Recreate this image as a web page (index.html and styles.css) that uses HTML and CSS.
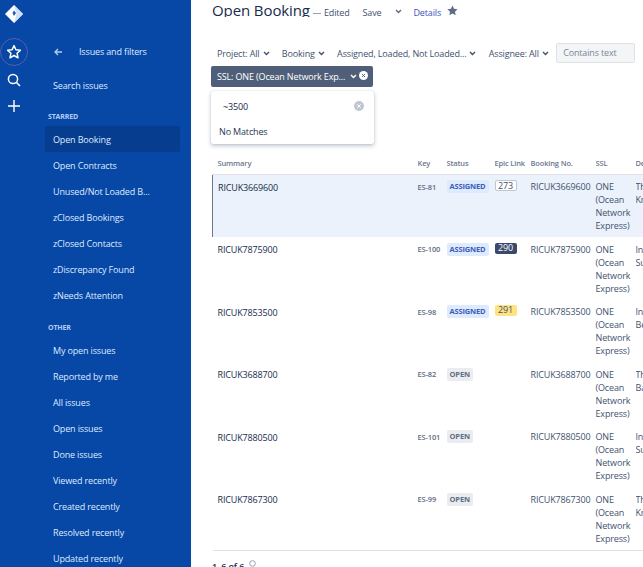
FILE: index.html
```html
<!DOCTYPE html>
<html lang="en">
<head>
  <meta charset="UTF-8">
  <title>Open Booking</title>
  <link rel="stylesheet" href="styles.css">
</head>
<body>

<div class="rail">
  <svg class="logo" width="18" height="18" viewBox="0 0 18 18">
    <path d="M9 0 L18 9 L9 18 L0 9 Z" fill="#fff"/>
    <path d="M9 0 L18 9 L9 18 L11.5 9 Z" fill="#cfe0f8"/>
    <path d="M9 5.5 L11 8 L9 11 L7.5 8 Z" fill="#1c5cbd"/>
  </svg>
  <button class="railBtn railBtnRing">
    <svg width="16" height="16" viewBox="0 0 16 16"><path d="M8 1.6 L9.9 5.7 L14.4 6.2 L11.1 9.3 L12 13.8 L8 11.5 L4 13.8 L4.9 9.3 L1.6 6.2 L6.1 5.7 Z" fill="none" stroke="#fff" stroke-width="1.5" stroke-linejoin="round"/></svg>
  </button>
  <button class="railBtn">
    <svg width="16" height="16" viewBox="0 0 16 16"><circle cx="7" cy="7" r="4.6" fill="none" stroke="#fff" stroke-width="1.5"/><path d="M10.5 10.5 L14 14" stroke="#fff" stroke-width="1.6"/></svg>
  </button>
  <button class="railBtn">
    <svg width="16" height="16" viewBox="0 0 16 16"><path d="M8 2 V14 M2 8 H14" stroke="#fff" stroke-width="1.4"/></svg>
  </button>
</div>

<nav class="sidebar">
  <div class="backRow">
    <svg width="8" height="8" viewBox="0 0 8 8"><path d="M4 1 L1 4 L4 7 M1 4 H8" fill="none" stroke="#b3cdf2" stroke-width="1.3"/></svg>
    <span>Issues and filters</span>
  </div>
  <a class="navItem searchItem">Search issues</a>
  <h4>STARRED</h4>
  <a class="navItem selected">Open Booking</a>
  <a class="navItem">Open Contracts</a>
  <a class="navItem">Unused/Not Loaded B...</a>
  <a class="navItem">zClosed Bookings</a>
  <a class="navItem">zClosed Contacts</a>
  <a class="navItem">zDiscrepancy Found</a>
  <a class="navItem">zNeeds Attention</a>
  <h4 class="otherHead">OTHER</h4>
  <a class="navItem">My open issues</a>
  <a class="navItem">Reported by me</a>
  <a class="navItem">All issues</a>
  <a class="navItem">Open issues</a>
  <a class="navItem">Done issues</a>
  <a class="navItem">Viewed recently</a>
  <a class="navItem">Created recently</a>
  <a class="navItem">Resolved recently</a>
  <a class="navItem">Updated recently</a>
</nav>

<main>
  <div class="titleRow">
    <h1>Open Booking</h1>
    <span class="edited"><i class="dash"></i>Edited</span>
    <span class="save">Save</span>
    <svg class="chev" width="7" height="5" viewBox="0 0 7 5"><path d="M1 1 L3.5 3.5 L6 1" fill="none" stroke="#5e6c84" stroke-width="1.4"/></svg>
    <a class="details">Details</a>
    <svg class="star" width="11" height="11" viewBox="0 0 16 16"><path d="M8 .8 L10.2 5.6 L15.4 6.2 L11.6 9.8 L12.6 15 L8 12.4 L3.4 15 L4.4 9.8 L.6 6.2 L5.8 5.6 Z" fill="#5e6c84"/></svg>
  </div>

  <div class="filters">
    <span class="filter">Project: All <svg class="chev" width="7" height="5" viewBox="0 0 7 5"><path d="M1 1 L3.5 3.5 L6 1" fill="none" stroke="#42526e" stroke-width="1.4"/></svg></span>
    <span class="filter">Booking <svg class="chev" width="7" height="5" viewBox="0 0 7 5"><path d="M1 1 L3.5 3.5 L6 1" fill="none" stroke="#42526e" stroke-width="1.4"/></svg></span>
    <span class="filter">Assigned, Loaded, Not Loaded... <svg class="chev" width="7" height="5" viewBox="0 0 7 5"><path d="M1 1 L3.5 3.5 L6 1" fill="none" stroke="#42526e" stroke-width="1.4"/></svg></span>
    <span class="filter">Assignee: All <svg class="chev" width="7" height="5" viewBox="0 0 7 5"><path d="M1 1 L3.5 3.5 L6 1" fill="none" stroke="#42526e" stroke-width="1.4"/></svg></span>
    <span class="textFilter">Contains text</span>
  </div>

  <div class="sslFilter">
    <span class="sslText">SSL: ONE (Ocean Network Exp...</span>
    <svg class="chev" width="7" height="5" viewBox="0 0 7 5"><path d="M1 1 L3.5 3.5 L6 1" fill="none" stroke="#fff" stroke-width="1.4"/></svg>
    <svg class="clearDot" width="9" height="9" viewBox="0 0 10 10"><circle cx="5" cy="5" r="5" fill="#fff"/><path d="M3.3 3.3 L6.7 6.7 M6.7 3.3 L3.3 6.7" stroke="#505f79" stroke-width="1"/></svg>
  </div>

  <div class="dropdown">
    <div class="dropSearch">
      <span>~3500</span>
      <svg width="10" height="10" viewBox="0 0 10 10"><circle cx="5" cy="5" r="5" fill="#c1c7d0"/><path d="M3.3 3.3 L6.7 6.7 M6.7 3.3 L3.3 6.7" stroke="#fff" stroke-width="1"/></svg>
    </div>
    <div class="noMatch">No Matches</div>
  </div>

  <table>
    <colgroup>
      <col class="cSummary"><col class="cKey"><col class="cStatus"><col class="cEpic"><col class="cBooking"><col class="cSsl"><col class="cDesc">
    </colgroup>
    <thead>
      <tr><th>Summary</th><th>Key</th><th>Status</th><th>Epic Link</th><th>Booking No.</th><th>SSL</th><th>Description</th></tr>
    </thead>
    <tbody>
      <tr class="current">
        <td class="summary">RICUK3669600</td><td class="key">ES-81</td><td><span class="lozenge assigned">ASSIGNED</span></td>
        <td><span class="epic epicWhite">273</span></td><td>RICUK3669600</td><td>ONE (Ocean Network Express)</td><td class="desc">The<br>Kn</td>
      </tr>
      <tr>
        <td class="summary">RICUK7875900</td><td class="key">ES-100</td><td><span class="lozenge assigned">ASSIGNED</span></td>
        <td><span class="epic epicDark">290</span></td><td>RICUK7875900</td><td>ONE (Ocean Network Express)</td><td class="desc">In<br>Su</td>
      </tr>
      <tr>
        <td class="summary">RICUK7853500</td><td class="key">ES-98</td><td><span class="lozenge assigned">ASSIGNED</span></td>
        <td><span class="epic epicYellow">291</span></td><td>RICUK7853500</td><td>ONE (Ocean Network Express)</td><td class="desc">In<br>Be</td>
      </tr>
      <tr>
        <td class="summary">RICUK3688700</td><td class="key">ES-82</td><td><span class="lozenge open">OPEN</span></td>
        <td></td><td>RICUK3688700</td><td>ONE (Ocean Network Express)</td><td class="desc">The<br>Ba</td>
      </tr>
      <tr>
        <td class="summary">RICUK7880500</td><td class="key">ES-101</td><td><span class="lozenge open">OPEN</span></td>
        <td></td><td>RICUK7880500</td><td>ONE (Ocean Network Express)</td><td class="desc">In<br>Su</td>
      </tr>
      <tr>
        <td class="summary">RICUK7867300</td><td class="key">ES-99</td><td><span class="lozenge open">OPEN</span></td>
        <td></td><td>RICUK7867300</td><td>ONE (Ocean Network Express)</td><td class="desc">The<br>Kn</td>
      </tr>
    </tbody>
  </table>

  <div class="pager">
    <span>1–6 of 6</span>
    <svg width="7" height="7" viewBox="0 0 7 7"><circle cx="3.5" cy="3.5" r="2.8" fill="none" stroke="#97a0af"/></svg>
  </div>
</main>

</body>
</html>
```

FILE: styles.css
```css
* {
  margin: 0;
  padding: 0;
  box-sizing: border-box;
}
html, body {
  height: 100%;
  overflow: hidden;
}
body {
  display: flex;
  font-family: "Open Sans", "Noto Sans", sans-serif;
  font-size: 9px;
  letter-spacing: -.15px;
  color: #172b4d;
  background: #fff;
}
.chev {
  flex: none;
}

/* rail + sidebar */
.rail {
  width: 45px;
  flex: none;
  background: #0747a6;
  display: flex;
  flex-direction: column;
  align-items: flex-start;
  padding-top: 5px;
  color: #fff;
}
.logo {
  margin: 0 0 15px 5px;
}
.railBtn {
  width: 28px;
  height: 26px;
  background: none;
  border: none;
  display: flex;
  align-items: center;
  justify-content: center;
}
.railBtnRing {
  height: 28px;
  border: 1px solid #5a5cb0;
  border-radius: 50%;
  margin-bottom: 1px;
}
.sidebar {
  width: 146px;
  flex: none;
  background: #0747a6;
  color: #deebff;
  padding-right: 11px;
}
.backRow {
  display: flex;
  align-items: center;
  gap: 17px;
  height: 13px;
  margin: 45px 0 0 9px;
}
.navItem {
  display: flex;
  align-items: center;
  height: 26px;
  padding-left: 8px;
}
.searchItem {
  margin-top: 14px;
}
.selected {
  background: #073d8e;
  border-radius: 1px;
}
.sidebar h4 {
  font-size: 7px;
  font-weight: 700;
  color: #b3cdf2;
  padding-left: 3px;
  margin-top: 13px;
  margin-bottom: 4px;
  height: 11px;
  line-height: 11px;
}
.sidebar .otherHead {
  margin-top: 14px;
  margin-bottom: 4px;
}

/* main */
main {
  flex: 1;
  min-width: 0;
  padding-left: 21px;
  position: relative;
  overflow: hidden;
}
.titleRow {
  display: flex;
  align-items: center;
  height: 17px;
  overflow: hidden;
  color: #42526e;
}
h1 {
  font-size: 15px;
  font-weight: 400;
  color: #172b4d;
  letter-spacing: -.1px;
  line-height: 20px;
  margin: 3px 3px 0 0;
}
.dash {
  display: inline-block;
  width: 8px;
  height: 1px;
  background: #97a0af;
  margin-right: 3px;
  vertical-align: middle;
}
.edited {
  margin: 7px 13px 0 0;
}
.save {
  margin: 7px 14px 0 0;
}
.titleRow .chev {
  margin-top: 5px;
}
.details {
  color: #3b52c4;
  margin: 7px 7px 0 11px;
}
.titleRow .star {
  margin: 4px 0 0 -1px;
}
.filters {
  display: flex;
  align-items: center;
  height: 20px;
  margin-top: 26px;
  padding-left: 5px;
  color: #42526e;
  gap: 12.3px;
}
.filter {
  display: flex;
  align-items: center;
  gap: 3px;
  white-space: nowrap;
}
.textFilter {
  width: 79px;
  height: 20px;
  flex: none;
  margin-left: -5px;
  background: #f4f5f7;
  border: 1px solid #dfe1e6;
  border-radius: 2px;
  padding-left: 6px;
  line-height: 18px;
  color: #7a869a;
}
.sslFilter {
  display: flex;
  align-items: center;
  width: 162px;
  height: 21px;
  margin: 3px 0 0 -1px;
  padding-left: 6px;
  background: #505f79;
  color: #fff;
  border-radius: 2px;
  white-space: nowrap;
}
.sslText {
  width: 129px;
}
.sslFilter .chev {
  margin-left: 4px;
}
.clearDot {
  margin: -2px 0 0 2px;
}

/* dropdown sits over the page */
.dropdown {
  position: absolute;
  left: 20px;
  top: 91px;
  width: 163px;
  height: 53px;
  background: #fff;
  border-radius: 2px;
  box-shadow: 0 2px 4px rgba(9,30,66,.25), 0 0 1px rgba(9,30,66,.3);
  z-index: 2;
}
.dropSearch {
  display: flex;
  justify-content: space-between;
  align-items: center;
  height: 30px;
  padding: 0 10px 0 12px;
  color: #172b4d;
}
.noMatch {
  padding: 4px 0 0 8px;
  color: #253858;
}

/* table */
table {
  border-collapse: collapse;
  table-layout: fixed;
  width: 431px;
  margin-top: 68px;
  line-height: 13px;
}
.cSummary { width: 205px; }
.cKey { width: 29px; }
.cStatus { width: 48px; }
.cEpic { width: 36px; }
.cBooking { width: 65px; }
.cSsl { width: 40px; }
.cDesc { width: 8px; }
th {
  text-align: left;
  font-size: 7.5px;
  font-weight: 600;
  color: #6b778c;
  padding: 0 0 2px 0;
  border-bottom: 1px solid #dfe1e6;
  white-space: nowrap;
  overflow: hidden;
  height: 19px;
}
th:first-child {
  padding-left: 5px;
}
td {
  vertical-align: top;
  padding: 5.5px 0 5px 0;
  height: 62.2px;
  color: #42526e;
}
tbody tr:last-child td {
  border-bottom: 1px solid #dfe1e6;
}
td.summary {
  padding: 6px 0 0 5px;
  color: #172b4d;
}
td.key {
  padding-top: 6px;
  font-size: 7.5px;
  font-weight: 600;
  color: #5e6c84;
  white-space: nowrap;
}
.desc {
  white-space: nowrap;
  overflow: hidden;
}
.current td {
  background: #ebf2fb;
}
.current td:first-child {
  border-left: 1px solid #6b778c;
}
.lozenge {
  display: block;
  width: fit-content;
  padding: 0 3px;
  height: 13px;
  line-height: 13px;
  font-size: 7.5px;
  font-weight: 700;
  border-radius: 2px;
}
.assigned {
  background: #deebff;
  color: #3b5cb8;
}
.open {
  background: #ebecf0;
  color: #5e6c84;
}
.epic {
  display: block;
  width: 22px;
  height: 11px;
  line-height: 10px;
  text-align: center;
  border-radius: 2px;
}
.epicWhite {
  background: #fff;
  border: 1px solid #c1c7d0;
  color: #42526e;
}
.epicDark {
  background: #3b4a6b;
  color: #fff;
}
.epicYellow {
  background: #ffe380;
  color: #42526e;
}
.pager {
  display: flex;
  align-items: flex-start;
  gap: 5px;
  margin: 9px 0 0 0;
  color: #172b4d;
  font-weight: 600;
}
```
